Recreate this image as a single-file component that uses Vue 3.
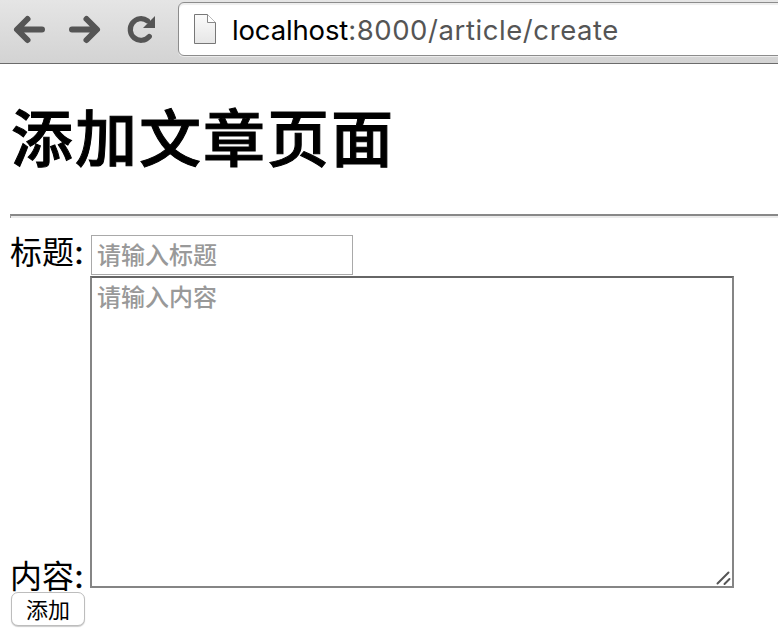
<script setup>
import { ref } from 'vue'

const title = ref('')
const content = ref('')
</script>

<template>
  <div class="window">
    <header class="toolbar">
      <svg class="nav" viewBox="0 0 178 63" width="178" height="63">
        <g fill="none" stroke="#555" stroke-width="6" stroke-linecap="round" stroke-linejoin="round">
          <path d="M42 29.5H18M27.5 19L17 29.5L27.5 40" />
          <path d="M72 29.5H96M86.500 19L97 29.500L86.500 40" />
          <path d="M149.300 36.500A10.800 10.800 0 1 1 147.500 20.800" stroke-width="5.200" />
        </g>
        <path d="M155 16V28H143Z" fill="#555" />
      </svg>
      <div class="address">
        <svg class="page-icon" viewBox="0 0 24 32" width="24" height="32">
          <defs>
            <linearGradient id="sheet" x1="0" y1="0" x2="0" y2="1">
              <stop offset="0" stop-color="#fbfbfb" />
              <stop offset="1" stop-color="#e6e6e6" />
            </linearGradient>
          </defs>
          <path d="M1.500 1.500H14.500L22.500 9.500V30.500H1.500Z" fill="url(#sheet)" stroke="#777" />
          <path d="M14.500 1.500V9.500H22.500" fill="#fff" stroke="#888" />
        </svg>
        <span class="url"><b>localhost</b>:8000/article/create</span>
      </div>
    </header>

    <main class="page">
      <h1>添加文章页面</h1>
      <div class="rule"></div>
      <form @submit.prevent>
        <div class="row">
          <label for="title">标题<i>:</i></label>
          <input id="title" v-model="title" type="text" placeholder="请输入标题" />
        </div>
        <div class="row content-row">
          <label for="content">内容<i>:</i></label>
          <div class="area">
            <textarea id="content" v-model="content" placeholder="请输入内容"></textarea>
            <svg class="grip" viewBox="0 0 16 16" width="16" height="16">
              <path d="M1.500 13.500L12.500 2.500M8.500 14L13.500 9" stroke="#555" stroke-width="2" stroke-linecap="round" />
            </svg>
          </div>
        </div>
        <button type="submit">添加</button>
      </form>
    </main>
  </div>
</template>

<style>
body {
  margin: 0;
  background: #fff;
  overflow: hidden;
}
</style>

<style scoped>
.window {
  width: 778px;
  height: 634px;
  overflow: hidden;
  background: #fff;
  color: #000;
  font-family: "Liberation Sans", "Noto Sans CJK SC", sans-serif;
}
.toolbar {
  box-sizing: border-box;
  height: 64px;
  display: flex;
  align-items: flex-start;
  background: linear-gradient(#e5e5e5, #d3d3d3);
  border-bottom: 1px solid #6b6b6b;
}
.nav {
  flex: none;
}
.address {
  box-sizing: border-box;
  flex: none;
  width: 620px;
  height: 54px;
  margin-top: 2px;
  padding-left: 14px;
  display: flex;
  align-items: center;
  background: #fff;
  border: 1px solid #8c8c8c;
  border-radius: 6px;
  box-shadow: inset 0 2px 1px #eee, 0 1px 0 #ececec;
}
.page-icon {
  flex: none;
}
.url {
  margin-left: 15px;
  padding-top: 1px;
  font: 27.5px/50px Inter, sans-serif;
  letter-spacing: 0.58px;
  color: #555;
  white-space: nowrap;
}
.url b {
  font-weight: 400;
  letter-spacing: -0.15px;
  color: #000;
}
.page {
  padding-left: 10px;
}
h1 {
  box-sizing: border-box;
  margin: 0;
  padding: 29px 0 0 1px;
  height: 150px;
  font-size: 62px;
  line-height: 96px;
  font-weight: 500;
  letter-spacing: 2px;
  -webkit-text-stroke: 1px #000;
}
.rule {
  box-sizing: border-box;
  height: 4px;
  border-top: 2px solid #888;
  border-left: 1px solid #999;
  background: #ebebeb;
}
.row {
  display: flex;
  align-items: flex-start;
}
form {
  padding-top: 17px;
}
label {
  flex: none;
  width: 81px;
  font-size: 32px;
  line-height: 36px;
  white-space: nowrap;
}
label i {
  font-family: "Liberation Serif", serif;
  font-size: 36px;
  font-style: normal;
  line-height: 1px;
  -webkit-text-stroke: 0.5px #000;
}
input,
textarea {
  box-sizing: border-box;
  display: block;
  margin: 0;
  outline: none;
  border-radius: 0;
  background: #fff;
  color: #000;
  font-family: "Liberation Sans", "Noto Sans CJK SC", sans-serif;
  font-size: 24px;
}
input::placeholder,
textarea::placeholder {
  color: #999;
  opacity: 1;
  font-weight: 500;
}
input {
  width: 262px;
  height: 40px;
  padding: 1px 5px 0;
  border: 1px solid #a9a9a9;
}
.content-row {
  margin-top: 1px;
}
.content-row label {
  align-self: flex-end;
  width: 80px;
  height: 28px;
  line-height: 34px;
}
.area {
  position: relative;
}
textarea {
  width: 644px;
  height: 312px;
  padding: 2px 5px 0;
  line-height: 36px;
  resize: none;
  border: 2px solid #858585;
  border-top-color: #666;
}
.grip {
  position: absolute;
  right: 2px;
  bottom: 2px;
}
button {
  display: block;
  box-sizing: border-box;
  width: 74px;
  height: 34px;
  margin: 4px 0 0 1px;
  padding: 3px 0 0;
  border: 1px solid #bdbdbd;
  border-radius: 7px;
  background: #fff;
  box-shadow: 0 1px 1px #ccc;
  color: #000;
  font: 22px/29px "Liberation Sans", "Noto Sans CJK SC", sans-serif;
}
</style>
